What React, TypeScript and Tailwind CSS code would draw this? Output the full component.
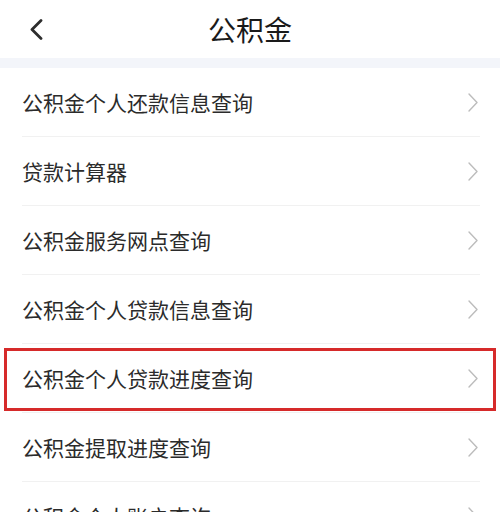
const items = [
  "公积金个人还款信息查询",
  "贷款计算器",
  "公积金服务网点查询",
  "公积金个人贷款信息查询",
  "公积金个人贷款进度查询",
  "公积金提取进度查询",
  "公积金个人账户查询",
];

const font = { fontFamily: '"Noto Sans CJK SC", "Noto Sans", sans-serif' };

function BackArrow() {
  return (
    <svg width="14" height="21" viewBox="0 0 14 21" fill="none">
      <polyline points="12,1.5 3,10.5 12,19.5" stroke="#2d2d2d" strokeWidth="2.8" strokeLinecap="round" strokeLinejoin="round" />
    </svg>
  );
}

function Arrow() {
  return (
    <svg width="10" height="19" viewBox="0 0 10 19" fill="none">
      <polyline points="1,1 9,9.5 1,18" stroke="#bcbcbc" strokeWidth="1.4" strokeLinecap="round" strokeLinejoin="round" />
    </svg>
  );
}

export default function App() {
  return (
    <div className="w-[500px] h-[512px] overflow-hidden bg-white" style={font}>
      {/* Header */}
      <div className="grid h-[58px] grid-cols-[80px_1fr_80px] items-center">
        <div className="flex pl-[29px]">
          <BackArrow />
        </div>
        <h1 className="text-center text-[28px] font-normal leading-none text-[#1a1a1a]">公积金</h1>
        <div />
      </div>
      <div className="h-[10px] bg-[#f3f5fa]" />

      {/* List */}
      <div className="flex flex-col">
        {items.map((label, i) => (
          <div key={label} className="relative px-[20px] pl-[22px]">
            <div
              className={`flex h-[69px] items-center pr-[2px] ${
                i < items.length - 1 ? "border-b border-[#f1f1f1]" : ""
              }`}
            >
              <span className="flex-1 text-[21px] leading-none text-[#2b2b2b]">{label}</span>
              <Arrow />
            </div>
            {i === 4 && (
              <div className="absolute left-[4px] right-[4px] top-[4px] bottom-[2px] border-[3px] border-[#d62a2a]" />
            )}
          </div>
        ))}
      </div>
    </div>
  );
}
